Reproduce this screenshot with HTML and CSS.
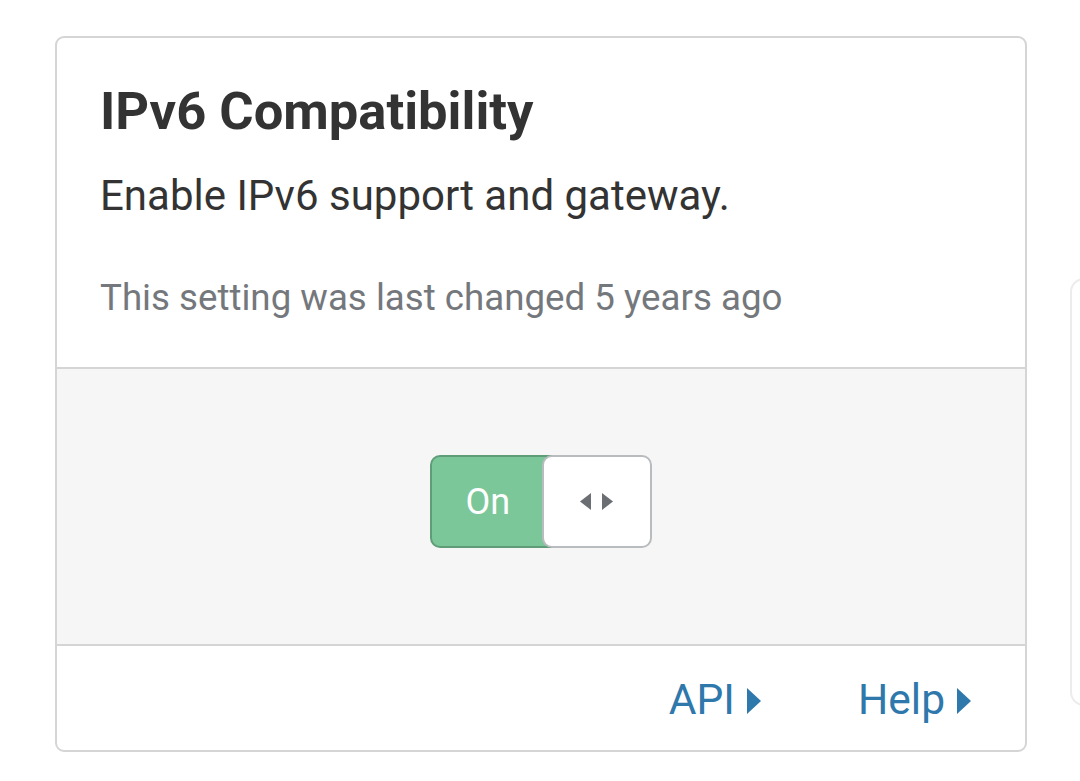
FILE: index.html
```html
<!DOCTYPE html>
<html>
<head>
<meta charset="utf-8">
<link rel="stylesheet" href="styles.css">
</head>
<body>
<div class="page">
  <div class="card">
    <div class="card-body">
      <h1 class="title">IPv6 Compatibility</h1>
      <p class="desc">Enable IPv6 support and gateway.</p>
      <p class="meta">This setting was last changed 5 years ago</p>
    </div>
    <div class="card-control">
      <div class="toggle">
        <span class="toggle-on">On</span>
        <span class="toggle-handle">
          <svg width="34" height="18" viewBox="0 0 34 18"><polygon points="11,0 11,17 0,8.5" fill="#6b6f73"/><polygon points="22,0 22,17 33,8.5" fill="#6b6f73"/></svg>
        </span>
      </div>
    </div>
    <div class="card-footer">
      <a class="link">API<svg class="caret" width="14" height="26" viewBox="0 0 14 26"><polygon points="0,0 14,13 0,26" fill="#2e78ab"/></svg></a>
      <a class="link">Help<svg class="caret" width="14" height="26" viewBox="0 0 14 26"><polygon points="0,0 14,13 0,26" fill="#2e78ab"/></svg></a>
    </div>
  </div>
  <div class="card card-next"></div>
</div>
</body>
</html>
```
FILE: styles.css
```css
html, body {
  margin: 0;
  padding: 0;
  background: #ffffff;
  font-family: Roboto, "Noto Sans", sans-serif;
  overflow: hidden;
}
.page {
  display: flex;
  align-items: flex-start;
  gap: 43px;
  padding: 36px 0 0 55px;
  width: 1300px;
}
.card {
  width: 972px;
  flex: none;
  box-sizing: border-box;
  border: 2px solid #d5d5d5;
  border-radius: 9px;
  background: #fff;
  overflow: hidden;
}
.card-next {
  width: 300px;
  height: 428px;
  margin-top: 242px;
  border: 2px solid #ececec;
  border-radius: 14px;
}
.card-body {
  padding: 42px 43px 0 43px;
  height: 331px;
  box-sizing: border-box;
  border-bottom: 2px solid #d5d5d5;
}
.title {
  margin: 0;
  font-size: 52.5px;
  line-height: 62px;
  font-weight: 700;
  color: #333333;
}
.desc {
  margin: 29px 0 0 0;
  font-size: 42px;
  line-height: 49px;
  color: #333333;
}
.meta {
  margin: 56px 0 0 0;
  font-size: 36.7px;
  line-height: 43px;
  color: #74787c;
}
.card-control {
  height: 277px;
  background: #f6f6f6;
  border-bottom: 2px solid #d5d5d5;
  display: flex;
  justify-content: center;
  align-items: flex-start;
  padding-top: 86px;
  box-sizing: border-box;
}
.toggle {
  display: flex;
  height: 93px;
  width: 222px;
}
.toggle-on {
  width: 124px;
  box-sizing: border-box;
  background: #7bc79a;
  border: 2px solid #5f9d78;
  border-right: none;
  border-radius: 10px 0 0 10px;
  color: #ffffff;
  font-size: 36px;
  display: flex;
  align-items: center;
  justify-content: center;
  padding-right: 10px;
  margin-right: -11px;
}
.toggle-handle {
  position: relative;
  width: 110px;
  box-sizing: border-box;
  background: #ffffff;
  border: 2px solid #b9bcbe;
  border-radius: 10px;
  display: flex;
  align-items: center;
  justify-content: center;
}
.card-footer {
  height: 104px;
  display: flex;
  justify-content: flex-end;
  align-items: center;
  gap: 97px;
  padding: 2px 54px 0 0;
  box-sizing: border-box;
}
.link {
  display: flex;
  align-items: center;
  gap: 12px;
  font-size: 42.5px;
  color: #2e78ab;
  text-decoration: none;
}
.caret {
  display: block;
  margin-top: 4px;
}
```
